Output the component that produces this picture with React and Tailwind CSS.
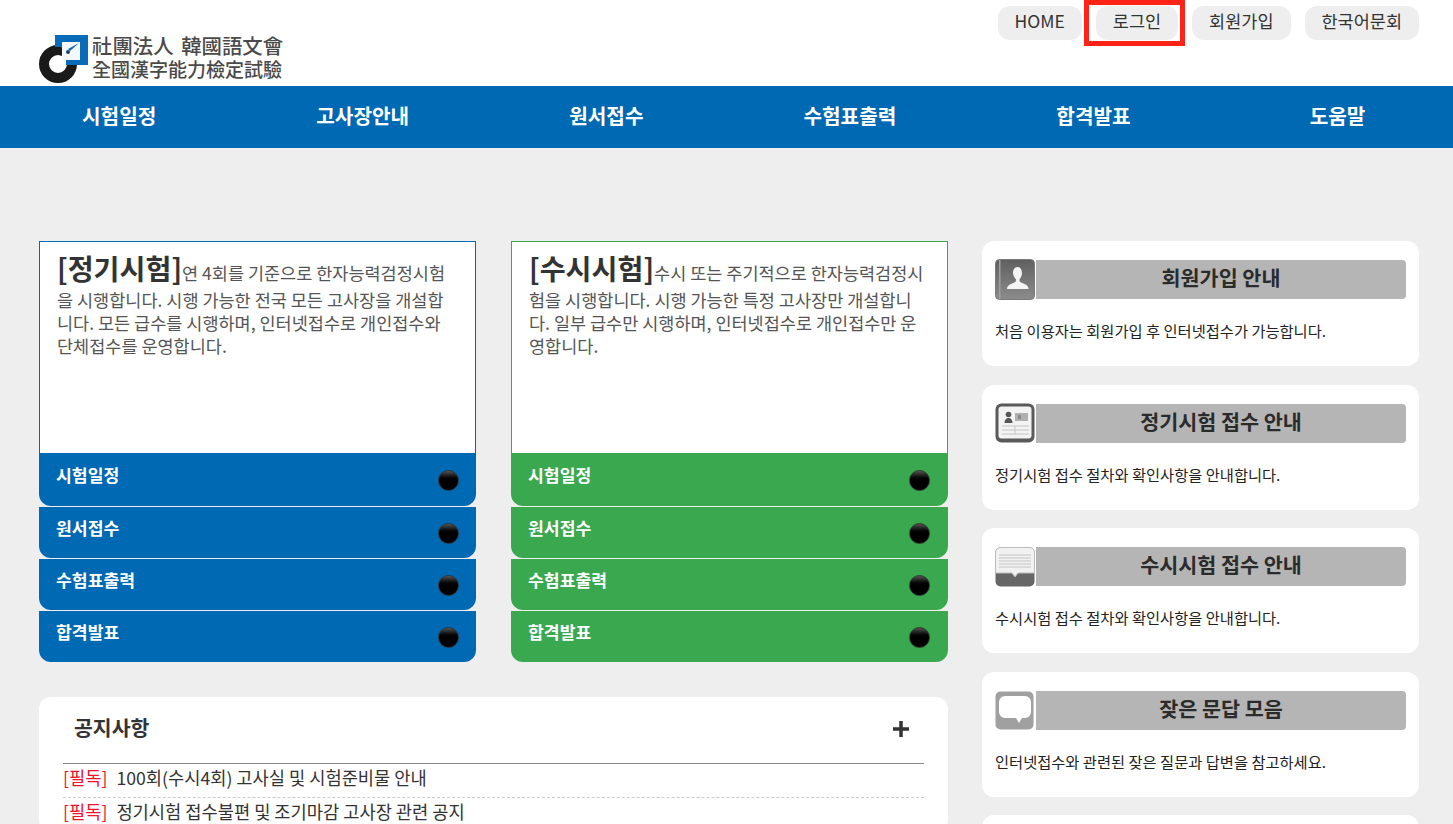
const topLinks = ["HOME", "로그인", "회원가입", "한국어문회"];
const nav = ["시험일정", "고사장안내", "원서접수", "수험표출력", "합격발표"];
const rows = ["시험일정", "원서접수", "수험표출력", "합격발표"];

function Logo() {
  return (
    <svg width="50" height="50" viewBox="0 0 50 50" className="shrink-0">
      <circle cx="19" cy="31" r="14" fill="none" stroke="#1a1a1a" strokeWidth="10" />
      <path d="M16 2H49V32H27V20L22 14H16Z" fill="#0a6cb8" />
      <path d="M23 9H41V27H23Z" fill="#f4f8fb" />
      <path d="M40 10L31 18L29 16Z" fill="#0a6cb8" />
      <circle cx="29" cy="19" r="2" fill="#16466f" />
    </svg>
  );
}

function IconUser() {
  return (
    <svg width="40" height="41" viewBox="0 0 40 41">
      <defs>
        <linearGradient id="g1" x1="0" y1="0" x2="0" y2="1">
          <stop offset="0" stopColor="#5f5f5f" />
          <stop offset="1" stopColor="#8c8c8c" />
        </linearGradient>
      </defs>
      <rect x="0.5" y="0.5" width="39" height="40" rx="4" fill="url(#g1)" stroke="#7a7a7a" />
      <rect x="4" y="1" width="1.5" height="39" fill="#a0a0a0" />
      <path d="M22.500 8c3 0 4.500 3 4.500 6 0 3-1.500 5-2.500 6.500-.5 2 1 3 5 4.500 3 1 4 3 4 5H12c0-2 1-4 4-5 4-1.500 5.500-2.500 5-4.500C20 19 18 17 18 14c0-3 1.500-6 4.500-6z" fill="#f4f4f4" />
    </svg>
  );
}

function IconCard() {
  return (
    <svg width="40" height="40" viewBox="0 0 40 40">
      <rect x="0.5" y="0.5" width="39" height="39" rx="6" fill="#5a5a5a" />
      <rect x="3.500" y="3.500" width="33" height="32" rx="3" fill="#f3f3f3" />
      <circle cx="13.500" cy="11.500" r="2.800" fill="#555" />
      <path d="M9.500 20c0-3 1.500-5 4-5s4 2 4 5z" fill="#555" />
      <rect x="20" y="10" width="13" height="8" fill="#b0b0b0" />
      <rect x="23" y="12" width="3" height="4" fill="#888" />
      <path d="M7 23H34M7 27H34M7 31H34M20 23V31" stroke="#c4c4c4" strokeWidth="1" fill="none" />
    </svg>
  );
}

function IconNote() {
  return (
    <svg width="40" height="40" viewBox="0 0 40 40">
      <rect x="0.5" y="0.500" width="39" height="39" rx="5" fill="#666" />
      <path d="M5.500 0.500H34.500A5 5 0 0 1 39.500 5.500V26H23L20 30L17 26H0.500V5.500A5 5 0 0 1 5.500 0.500Z" fill="#f1f1f1" stroke="#bbb" />
      <path d="M4 8H36M4 11H36M4 14H36M4 17H36M4 20H36" stroke="#c4c4c4" strokeWidth="1" />
    </svg>
  );
}

function IconChat() {
  return (
    <svg width="39" height="39" viewBox="0 0 39 39">
      <rect x="0.500" y="0.500" width="38" height="38" rx="5" fill="#a0a0a0" />
      <path d="M10 5H30A6 6 0 0 1 36 11V21A6 6 0 0 1 30 27H27L24 32L21 27H10A6 6 0 0 1 4 21V11A6 6 0 0 1 10 5Z" fill="#fff" />
    </svg>
  );
}

function ExamCard({ title, text, bar, border, pr }) {
  return (
    <section className="w-[437px]">
      <div className={`h-[213px] border bg-white pt-[6px] pr-[20px] pl-[17px] text-[17.500px] leading-[23px] break-all text-[#555] ${border}`}>
        <span className="text-[28.200px] leading-[40px] font-semibold text-[#333]">{title}</span>
        {text}
      </div>
      <div className="flex flex-col gap-px bg-[#eeeeee]">
        {rows.map((r, i) => (
          <div
            key={r}
            className={`flex items-start justify-between rounded-b-xl pl-[17px] ${pr} ${i === 0 ? "h-[52px]" : "h-[51px]"} ${bar}`}
          >
            <span className="pt-[9px] text-[17.200px] leading-[24px] font-bold text-white">{r}</span>
            <span className="mt-[16px] h-[21px] w-[21px] rounded-full border border-[#333] bg-gradient-to-b from-[#555] via-[#000] to-[#000]" />
          </div>
        ))}
      </div>
    </section>
  );
}

function InfoCard({ icon, title, desc }) {
  return (
    <div className="h-[125px] rounded-xl bg-white px-[13px] pt-[18px]">
      <div className="flex h-[41px] items-center">
        <div className="flex w-[41px] shrink-0 items-center">{icon}</div>
        <div className="flex h-[39px] flex-1 items-center justify-center rounded-r bg-[#b5b5b5] pb-[3px] text-[20.700px] font-bold text-[#2b2b2b]">
          {title}
        </div>
      </div>
      <p className="mt-[19px] text-[15.300px] leading-[22px] text-[#222]">{desc}</p>
    </div>
  );
}

export default function App() {
  return (
    <div className="relative h-[824px] w-[1453px] overflow-hidden bg-[#eeeeee] font-['Noto_Sans_CJK_KR','Noto_Sans',sans-serif]">
      <header className="flex h-[86px] justify-between bg-white pr-[34px] pl-[39px]">
        <div className="flex items-start pt-[33px]">
          <Logo />
          <div className="mt-[1px] ml-[3px] leading-[23px] font-medium whitespace-nowrap text-[#4a4a4a]">
            <div className="text-[20.400px] [word-spacing:3px]">社團法人 韓國語文會</div>
            <div className="text-[19px]">全國漢字能力檢定試驗</div>
          </div>
        </div>
        <div className="flex items-start gap-[14px] pt-[6px]">
          {topLinks.map((t) => (
            <a key={t} className="flex h-[34px] items-center rounded-[12px] bg-[#eeeeee] px-[17px] pb-[3px] text-[17.500px] text-[#333]">
              {t}
            </a>
          ))}
        </div>
      </header>
      <div className="pointer-events-none absolute top-0 left-[1084px] h-[46px] w-[101px] border-[5px] border-[#ff2318]" />

      <nav className="flex h-[62px] items-center bg-[#0069b3] pb-[2px] pl-[82px] text-[20.200px] font-bold whitespace-nowrap text-white">
        <div className="flex gap-[160px]">
          {nav.map((n) => (
            <a key={n}>{n}</a>
          ))}
        </div>
        <a className="ml-[179px]">도움말</a>
      </nav>

      <main className="flex gap-[34px] pt-[93px] pl-[39px]">
        <div className="w-[909px]">
          <div className="flex gap-[35px]">
            <ExamCard
              title="[정기시험]"
              text="연 4회를 기준으로 한자능력검정시험을 시행합니다. 시행 가능한 전국 모든 고사장을 개설합니다. 모든 급수를 시행하며, 인터넷접수로 개인접수와 단체접수를 운영합니다."
              bar="bg-[#0069b3]"
              border="border-[#0069b3]"
              pr="pr-[17px]"
            />
            <ExamCard
              title="[수시시험]"
              text="수시 또는 주기적으로 한자능력검정시험을 시행합니다. 시행 가능한 특정 고사장만 개설합니다. 일부 급수만 시행하며, 인터넷접수로 개인접수만 운영합니다."
              bar="bg-[#3aa84f]"
              border="border-[#3aa84f]"
              pr="pr-[18px]"
            />
          </div>
          <section className="mt-[35px] rounded-xl bg-white px-[24px]">
            <div className="flex h-[66px] items-center justify-between pr-[14px] pb-[6px] pl-[11px]">
              <h2 className="text-[20.500px] font-semibold text-[#333]">공지사항</h2>
              <svg width="18" height="18" viewBox="0 0 18 18" className="mt-[4px]">
                <path d="M9 1V17M1 9H17" stroke="#333" strokeWidth="3.500" />
              </svg>
            </div>
            <ul className="border-t border-[#888] text-[17.650px]">
              <li className="flex h-[34px] items-center gap-[9px] border-b border-dashed border-[#ccc] pb-[5px] text-[#333]">
                <span className="text-[#f0122d]">[필독]</span>
                <span>100회(수시4회) 고사실 및 시험준비물 안내</span>
              </li>
              <li className="flex h-[34px] items-center gap-[9px] border-b border-dashed border-[#ccc] pb-[5px] text-[#333]">
                <span className="text-[#f0122d]">[필독]</span>
                <span>정기시험 접수불편 및 조기마감 고사장 관련 공지</span>
              </li>
            </ul>
          </section>
        </div>

        <aside className="flex w-[437px] flex-col gap-[18.500px]">
          <InfoCard icon={<IconUser />} title="회원가입 안내" desc="처음 이용자는 회원가입 후 인터넷접수가 가능합니다." />
          <InfoCard icon={<IconCard />} title="정기시험 접수 안내" desc="정기시험 접수 절차와 확인사항을 안내합니다." />
          <InfoCard icon={<IconNote />} title="수시시험 접수 안내" desc="수시시험 접수 절차와 확인사항을 안내합니다." />
          <InfoCard icon={<IconChat />} title="잦은 문답 모음" desc="인터넷접수와 관련된 잦은 질문과 답변을 참고하세요." />
          <div className="h-[125px] rounded-xl bg-white" />
        </aside>
      </main>
    </div>
  );
}
